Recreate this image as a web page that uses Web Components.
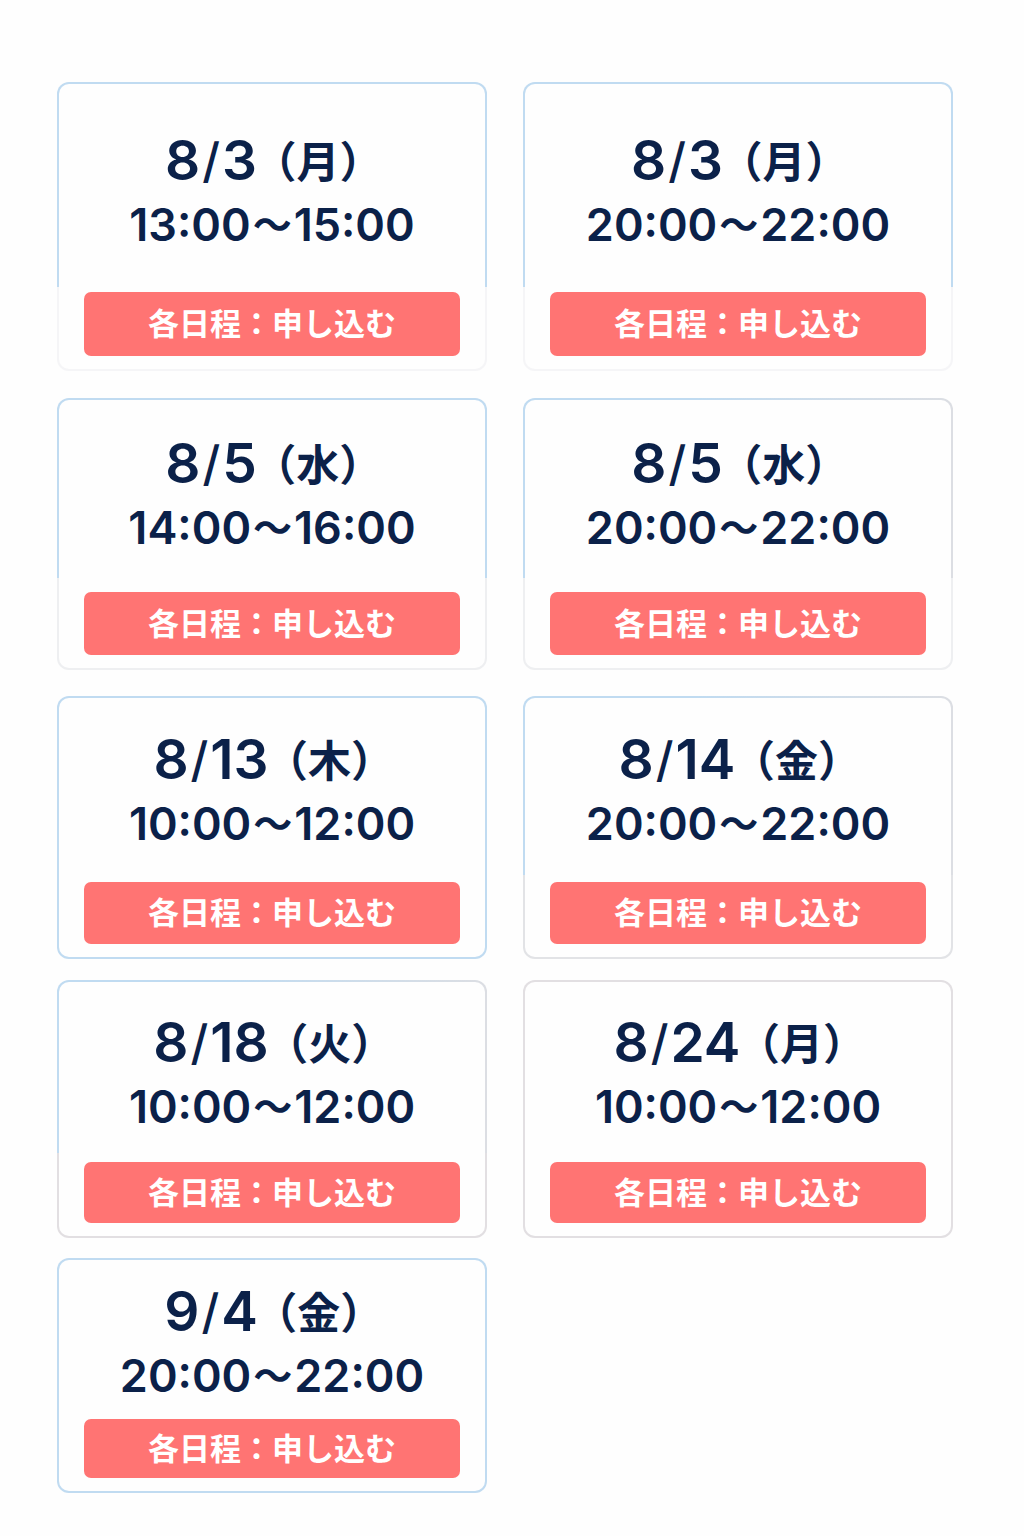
<!DOCTYPE html>
<html lang="ja">
<head>
<meta charset="utf-8">
<meta name="viewport" content="width=device-width, initial-scale=1">
<title>日程一覧</title>
<style>
  body { margin: 0; background: #fefefe; color: #0b2149; font-family: Inter, "Noto Sans CJK JP", sans-serif; }
</style>
</head>
<body>
<schedule-list>
  <schedule-row class="r1">
    <schedule-card date="8/3" day="月" time="13:00〜15:00"></schedule-card>
    <schedule-card date="8/3" day="月" time="20:00〜22:00"></schedule-card>
  </schedule-row>
  <schedule-row class="r2">
    <schedule-card date="8/5" day="水" time="14:00〜16:00"></schedule-card>
    <schedule-card date="8/5" day="水" time="20:00〜22:00" tone="fade"></schedule-card>
  </schedule-row>
  <schedule-row class="r3">
    <schedule-card date="8/13" day="木" time="10:00〜12:00" tone="blue"></schedule-card>
    <schedule-card date="8/14" day="金" time="20:00〜22:00" tone="fade"></schedule-card>
  </schedule-row>
  <schedule-row class="r4">
    <schedule-card date="8/18" day="火" time="10:00〜12:00" tone="fade"></schedule-card>
    <schedule-card date="8/24" day="月" time="10:00〜12:00" tone="gray"></schedule-card>
  </schedule-row>
  <schedule-row class="r5">
    <schedule-card date="9/4" day="金" time="20:00〜22:00" tone="blue"></schedule-card>
  </schedule-row>
</schedule-list>

<template id="list-template">
  <style>
    :host { display: block; }
    main { display: flex; flex-direction: column; padding: 82px 71px 42px 57px; }
    ::slotted(.r1) { --above: 41px; --below: 37px; --action: 64px; --split: 71%; --foot: #f5f5f7; margin-bottom: 27px; }
    ::slotted(.r2) { --above: 28px; --below: 34px; --action: 63px; --split: 66%; --foot: #eeeff1; margin-bottom: 26px; }
    ::slotted(.r3) { --above: 26px; --below: 28px; --action: 62px; --split: 68%; --foot: #e2e3e6; margin-bottom: 21px; }
    ::slotted(.r4) { --above: 25px; --below: 25px; --action: 61px; --split: 67%; --foot: #e2dfe2; margin-bottom: 20px; }
    ::slotted(.r5) { --above: 16px; --below: 13px; --action: 59px; }
  </style>
  <main><slot></slot></main>
</template>

<template id="row-template">
  <style>
    :host { display: grid; grid-template-columns: 1fr 1fr; column-gap: 36px; }
  </style>
  <slot></slot>
</template>

<template id="card-template">
  <style>
    :host { display: block; --left: #c0dbf1; --right: #c0dbf1; --end: var(--foot, #c0dbf1); }
    :host([tone="fade"]) { --right: #dcdee3; }
    :host([tone="blue"]) { --end: #c0dbf1; }
    :host([tone="gray"]) { --left: #e2dfe2; --right: #e2dfe2; --end: #e2dfe2; }
    article {
      display: flex; flex-direction: column;
      padding: var(--above) 25px 13px;
      border: 2px solid transparent; border-radius: 12px;
      background:
        linear-gradient(#fefefe, #fefefe) padding-box,
        linear-gradient(transparent var(--split, 100%), var(--end) var(--split, 100%)) border-box,
        linear-gradient(90deg, var(--left) 40%, var(--right)) border-box;
    }
    h2, p { margin: 0; text-align: center; font-weight: 600; white-space: nowrap; }
    h2 { height: 70px; font-size: 55px; line-height: 70px; }
    .slash { margin: 0 2px; font-size: 48px; font-weight: 500; line-height: 1; vertical-align: 2px; }
    .day { margin: 0 18px; font-size: 43px; line-height: 1; vertical-align: 2px; font-feature-settings: "halt"; }
    p { height: 60px; font-size: 45px; line-height: 60px; margin-bottom: var(--below); }
    .wave { margin: 0 2px; font-size: 39px; line-height: 1; vertical-align: 2px; }
    button {
      height: var(--action); padding: 0 0 4px; border: 0; border-radius: 7px;
      background: #ff7473; color: #fff; cursor: pointer;
      font: 600 31px/44px "Noto Sans CJK JP", sans-serif;
    }
  </style>
  <article>
    <h2><span class="month"></span><span class="slash">/</span><span class="date"></span><span class="day"></span></h2>
    <p><span class="from"></span><span class="wave">〜</span><span class="to"></span></p>
    <button type="button">各日程：申し込む</button>
  </article>
</template>

<script>
  class TemplateElement extends HTMLElement {
    constructor() {
      super();
      const template = document.getElementById(this.constructor.template);
      this.attachShadow({ mode: "open" }).append(template.content.cloneNode(true));
    }
  }
  class ScheduleList extends TemplateElement { static template = "list-template"; }
  class ScheduleRow extends TemplateElement { static template = "row-template"; }
  class ScheduleCard extends TemplateElement {
    static template = "card-template";
    connectedCallback() {
      const fill = (name, text) => { this.shadowRoot.querySelector(name).textContent = text; };
      const [month, date] = this.getAttribute("date").split("/");
      const [from, to] = this.getAttribute("time").split("〜");
      fill(".month", month);
      fill(".date", date);
      fill(".day", `（${this.getAttribute("day")}）`);
      fill(".from", from);
      fill(".to", to);
    }
  }
  customElements.define("schedule-list", ScheduleList);
  customElements.define("schedule-row", ScheduleRow);
  customElements.define("schedule-card", ScheduleCard);
</script>
</body>
</html>
